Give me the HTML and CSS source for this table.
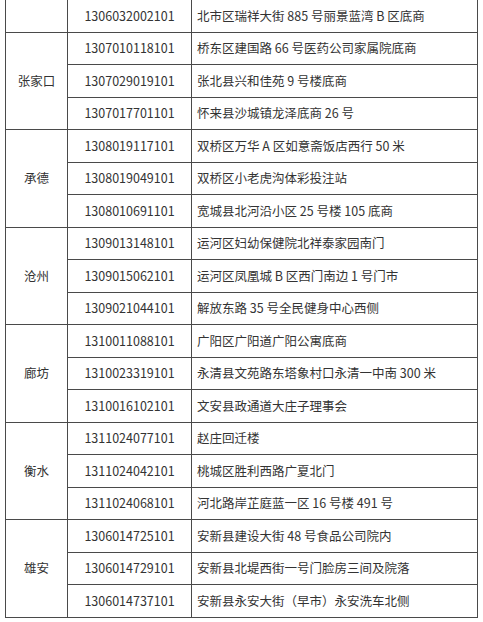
FILE: index.html
```html
<!DOCTYPE html>
<html lang="zh-CN">
<head>
<meta charset="utf-8">
<title>网点列表</title>
<link rel="stylesheet" href="styles.css">
</head>
<body>
<table class="sites">
  <colgroup>
    <col class="c-city">
    <col class="c-code">
    <col class="c-addr">
  </colgroup>
  <tbody>
    <tr><td class="city"></td><td class="code">1306032002101</td><td class="addr">北市区瑞祥大街 885 号丽景蓝湾 B 区底商</td></tr>

    <tr><td class="city" rowspan="3">张家口</td><td class="code">1307010118101</td><td class="addr">桥东区建国路 66 号医药公司家属院底商</td></tr>
    <tr><td class="code">1307029019101</td><td class="addr">张北县兴和佳苑 9 号楼底商</td></tr>
    <tr><td class="code">1307017701101</td><td class="addr">怀来县沙城镇龙泽底商 26 号</td></tr>

    <tr><td class="city" rowspan="3">承德</td><td class="code">1308019117101</td><td class="addr">双桥区万华 A 区如意斋饭店西行 50 米</td></tr>
    <tr><td class="code">1308019049101</td><td class="addr">双桥区小老虎沟体彩投注站</td></tr>
    <tr><td class="code">1308010691101</td><td class="addr">宽城县北河沿小区 25 号楼 105 底商</td></tr>

    <tr><td class="city" rowspan="3">沧州</td><td class="code">1309013148101</td><td class="addr">运河区妇幼保健院北祥泰家园南门</td></tr>
    <tr><td class="code">1309015062101</td><td class="addr">运河区凤凰城 B 区西门南边 1 号门市</td></tr>
    <tr><td class="code">1309021044101</td><td class="addr">解放东路 35 号全民健身中心西侧</td></tr>

    <tr><td class="city" rowspan="3">廊坊</td><td class="code">1310011088101</td><td class="addr">广阳区广阳道广阳公寓底商</td></tr>
    <tr><td class="code">1310023319101</td><td class="addr">永清县文苑路东塔象村口永清一中南 300 米</td></tr>
    <tr><td class="code">1310016102101</td><td class="addr">文安县政通道大庄子理事会</td></tr>

    <tr><td class="city" rowspan="3">衡水</td><td class="code">1311024077101</td><td class="addr">赵庄回迁楼</td></tr>
    <tr><td class="code">1311024042101</td><td class="addr">桃城区胜利西路广夏北门</td></tr>
    <tr><td class="code">1311024068101</td><td class="addr">河北路岸芷庭蓝一区 16 号楼 491 号</td></tr>

    <tr><td class="city" rowspan="3">雄安</td><td class="code">1306014725101</td><td class="addr">安新县建设大街 48 号食品公司院内</td></tr>
    <tr><td class="code">1306014729101</td><td class="addr">安新县北堤西街一号门脸房三间及院落</td></tr>
    <tr><td class="code">1306014737101</td><td class="addr">安新县永安大街（早市）永安洗车北侧</td></tr>
  </tbody>
</table>
</body>
</html>
```

FILE: styles.css
```css
html, body {
  margin: 0;
  padding: 0;
  background: #ffffff;
}

body {
  font-family: "Microsoft YaHei", "Noto Sans CJK SC", "Noto Sans", sans-serif;
  font-size: 12.5px;
  color: #333333;
}

.sites {
  border-collapse: collapse;
  table-layout: fixed;
  width: 472px;
  margin: -1px 0 0 5px;
}

.c-city { width: 62px; }
.c-code { width: 124px; }
.c-addr { width: 286px; }

.sites td {
  border: 1px solid #4a4a4a;
  height: 31.5px;
  padding: 0;
  line-height: 16px;
  vertical-align: middle;
  white-space: nowrap;
}

.city {
  text-align: center;
}

.code {
  text-align: center;
}

.addr {
  text-align: left;
  padding-left: 5px !important;
}
```
